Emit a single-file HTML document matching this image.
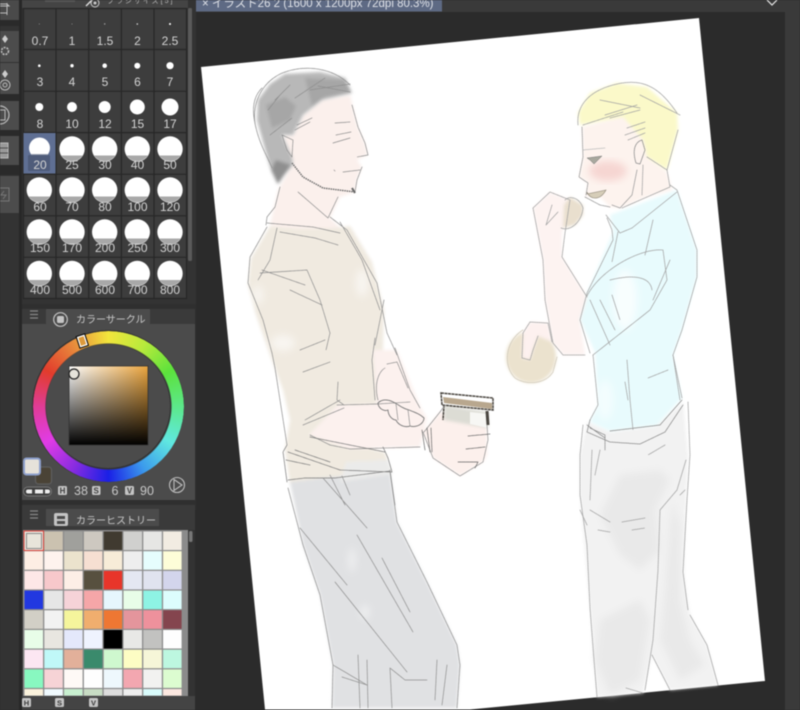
<!DOCTYPE html>
<html lang="ja"><head><meta charset="utf-8"><title>Clip Studio</title>
<style>
html,body{margin:0;padding:0;width:800px;height:710px;overflow:hidden;background:#2b2b2b}
body{position:relative;font-family:"Liberation Sans","Noto Sans CJK JP",sans-serif;filter:blur(.45px)}
svg{position:absolute;left:0;top:0}
#ring{position:absolute;left:33px;top:331px;width:151px;height:151px;border-radius:50%;
background:conic-gradient(from 0deg,#f2e63c,#b8ea3c 30deg,#5ce23c 60deg,#5ce88a 90deg,#60e8e0 120deg,#3c9cec 150deg,#1a20e6 180deg,#8a2ce0 210deg,#e03ce6 240deg,#e03c96 270deg,#e23c2c 300deg,#e88a3c 330deg,#f2e63c);
-webkit-mask:radial-gradient(circle,transparent 62.5px,#000 63.5px);mask:radial-gradient(circle,transparent 62.5px,#000 63.5px)}
#sq{position:absolute;left:69px;top:366px;width:79px;height:79px;background:linear-gradient(to bottom,rgba(0,0,0,0),#000),linear-gradient(to right,#fff,#eba53e)}
text{font-family:"Liberation Sans","Noto Sans CJK JP",sans-serif}
</style></head><body>
<svg width="800" height="710" viewBox="0 0 800 710">
<defs>
<filter id="bl" x="-10%" y="-10%" width="120%" height="120%"><feGaussianBlur stdDeviation="1.6"/></filter>
<filter id="bl3" x="-20%" y="-20%" width="140%" height="140%"><feGaussianBlur stdDeviation="4"/></filter>
<g id="b"><circle r="12.7" fill="#fff"/><path d="M-10.6,6.5H10.6A12.7,12.7 0 0 1-10.6,6.5Z" fill="#a8a8a8"/></g>
</defs>
<!-- window chrome -->
<rect width="800" height="710" fill="#2b2b2b"/>
<rect x="196" width="604" height="12" fill="#3a3a3a"/>
<rect x="785" width="15" height="710" fill="#3a3a3a"/>
<rect x="196" width="246" height="11.5" fill="#5e6a84"/>
<text x="202" y="7" font-size="11.5" fill="#dfe2e8">× イラスト26 2 (1600 x 1200px 72dpi 80.3%)</text>
<path d="M767,0 L772,5 L777,0" fill="none" stroke="#e8e8e8" stroke-width="1.2"/>
<!-- canvas -->
<polygon points="201,67 699,18 765,681 470,709.5 265,709.5" fill="#fff"/>
<!-- man 1 fills -->
<g filter="url(#bl)">
<polygon fill="#fbf0ec" points="322,100 350,95 358,127 365,143 368,155 357,160 362,167 357,180 355,192 340,197 330,218 345,232 300,232 270,225 278,190 292,165 283,135 293,135 303,115"/>
<polygon fill="#f0eae0" points="270,226 300,229 335,228 350,226 372,262 384,310 383,350 376,405 338,406 309,435 385,452 392,472 290,484 285,450 290,420 283,390 270,355 256,315 248,285 251,258"/>
<polygon fill="#fcf1ee" points="373,350 397,350 421,408 427,418 420,447 350,449 309,435 338,405 377,404"/>
<polygon fill="#fcf0ec" points="423,432 440,412 487,425 487,455 483,462 460,476 433,458"/>
<polygon fill="#e0e1e3" points="290,482 330,477 390,472 397,522 427,582 457,645 460,665 457,708 332,708 333,665 320,595 303,545"/>
<polygon fill="#ebebea" points="346,462 388,460 392,474 340,482"/>
</g>
<g filter="url(#bl3)" fill="#fff" opacity=".55">
<ellipse cx="283" cy="343" rx="12" ry="8"/><ellipse cx="362" cy="283" rx="6" ry="14"/><ellipse cx="258" cy="295" rx="5" ry="9"/>
<ellipse cx="352" cy="560" rx="3" ry="12"/><ellipse cx="365" cy="612" rx="4" ry="7"/>
</g>
<!-- hair 1 -->
<g filter="url(#bl)">
<polygon fill="#b8b8b8" points="257,120 258,100 270,84 285,74 320,72 345,78 352,93 322,100 303,115 293,135 282,135 292,157 293,165 277,183 270,167"/>
<polygon fill="#a6a6a6" points="266,105 285,97 296,106 290,120 272,128"/>
<polygon fill="#8f8f8f" points="276,160 291,165 278,184 271,170"/>
<polygon fill="#a6a6a6" points="305,78 345,80 351,92 325,97 312,106"/>
</g>
<!-- cup -->
<polygon fill="#dcdcd4" points="444,405 488,412 488,428 444,420" filter="url(#bl)"/>
<polygon fill="#f7f7f4" points="470,412 488,414 488,428 470,424"/>
<polygon fill="#b8a78e" points="443,397 492,403 492,409 444,403"/>
<path d="M441,393 L493,398 L493,410 L442,405Z M444,405 L443,420" fill="none" stroke="#4a4640" stroke-width="1.5" stroke-dasharray="3 .5"/>
<path d="M487,411 L488,425" stroke="#4a4640" stroke-width="3" fill="none"/>
<!-- man 1 lines -->
<g fill="none" stroke="#8e8e8e" stroke-width=".7" stroke-dasharray="3.5 .5" stroke-linecap="round" stroke-linejoin="round">
<path d="M256,128C250,105 262,80 285,72S335,69 350,85M262,88C252,98 252,112 256,128C260,145 268,158 272,168"/>
<path d="M290,85L275,100M268,110L280,95M295,98L325,78M310,90L350,84M318,86L350,92M270,135L292,118M297,125L312,118M295,130L310,122"/>
<path d="M282,135L293,140L292,157L287,150Z"/>
<path d="M352,105L358,127L365,143L368,155L357,157M362,167L357,180L355,192"/>
<path d="M333,143L350,138M335,123L350,122M336,135L351,132M343,172L360,170M334,170L335,171"/>
<path d="M280,187L275,207L267,217L266,225M338,197L328,218L313,205L298,192"/>
<path d="M267,223L313,227L340,233M280,232L315,238L338,245M330,217L347,230L377,283L387,333L397,355M340,222L362,260L380,310"/>
<path d="M267,227L250,257L248,283L263,320L272,353L275,368L287,445"/>
<path d="M277,228L270,260L258,280M260,273L307,270L320,300L330,333L326,350M262,270L305,285M290,290L322,305M300,350L325,340"/>
<path d="M375,338L372,360L375,400M384,300L375,345M395,348L410,390L420,408"/>
<path d="M303,372L330,362M338,382L337,400L344,405"/>
<path d="M305,420L340,400M303,425L344,408"/>
<path d="M337,405L377,404L410,402M310,435L330,445L350,449L420,447"/>
<path d="M385,368C378,372 374,385 378,400M387,364L397,362L408,388"/>
<path d="M378,403C383,398 390,400 395,403C399,405 402,408 409,410C414,412 420,414 424,418C424,424 416,428 410,426C405,428 398,425 396,420C392,420 388,415 388,410C384,412 378,408 378,403Z" stroke="#777" stroke-width=".9"/>
<path d="M396,404L398,420M408,410L410,426M424,432L440,412L445,405M487,425L488,440L483,462L460,476L433,458L423,432"/>
<path d="M422,430L425,450M427,428L430,452M431,428L432,452M468,436L490,434M466,449L485,447M458,462L478,462L475,468" stroke="#666"/>
<path d="M287,445L283,452L287,482M288,452L340,470L392,472L388,458L383,447M310,437L385,452M295,450L330,462M286,460L310,465M288,480L305,478L335,478L390,471" stroke="#7a7a7a"/>
<path d="M288,488L303,545L320,595L333,665L332,708M390,472L397,522L427,582L457,645L460,665L457,708"/>
<path d="M300,528L347,585M335,582L407,672M357,535L413,632M382,558L410,612M323,478L367,528M330,475L345,505M342,476L350,495M390,470L395,505"/>
<path d="M390,668L392,708M390,668L405,680L427,680M333,665L367,685M342,677L367,685M358,655L360,708M367,660L368,708M437,660L435,700M447,665L442,705"/>
</g>
<path d="M292,163L303,177L323,188L355,192" fill="none" stroke="#6a6a6a" stroke-width="1.4" stroke-dasharray="1.5 .8"/>
<path d="M352,188L355,193" stroke="#666" fill="none" stroke-width="2"/>
<!-- man 2 fills -->
<g filter="url(#bl)">
<polygon fill="#fbf9c9" points="578,113 590,93 617,83 647,87 677,113 678,130 667,170 647,157 643,140 623,117 580,125"/>
<polygon fill="#fdf3ee" points="582,127 623,117 643,140 647,157 667,172 672,190 647,197 620,208 610,207 600,197 585,197 588,183 579,177 583,157"/>
<polygon fill="#e8fbfd" points="610,215 677,190 697,250 697,277 682,330 673,355 682,398 657,425 610,431 590,422 598,405 595,352 580,320 587,293 613,232"/>
<polygon fill="#fdf3f1" points="533,208 550,192 570,200 562,233 562,257 587,297 580,320 585,355 563,355 553,343 545,300 543,260"/>
<ellipse cx="531" cy="357" rx="25" ry="26" fill="#ebe2ce"/>
<polygon fill="#fdf1ef" points="530,322 548,323 552,342 538,336 533,350 530,360 522,358 523,333"/>
<polygon fill="#e9dfce" points="570,197 583,205 583,215 575,225 563,228 564,205"/>
<polygon fill="#f2f2f2" points="587,422 610,432 657,426 683,402 688,455 683,572 690,615 707,645 718,685 670,690 652,655 643,693 597,697 590,608 580,495 580,455"/>
</g>
<ellipse cx="608" cy="171" rx="19" ry="10" fill="#f6d6d2" filter="url(#bl3)"/>
<g filter="url(#bl3)" fill="#fff"><ellipse cx="625" cy="300" rx="12" ry="30" opacity=".7"/><ellipse cx="605" cy="400" rx="8" ry="20" opacity=".5"/></g>
<g filter="url(#bl3)" fill="#e9e9e9">
<polygon points="600,515 620,475 660,470 670,480 655,510 660,550 640,570 620,555"/>
<polygon points="672,500 680,525 680,600 690,640 705,665 680,680 660,640 665,590"/>
<polygon points="600,620 640,600 650,620 640,680 610,695 595,660"/>
</g>
<!-- man 2 lines -->
<g fill="none" stroke="#a2a2a2" stroke-width=".75" stroke-dasharray="1.6 .6" stroke-linecap="round" stroke-linejoin="round">
<path d="M578,125C576,105 590,90 617,84S660,88 677,113M678,130L667,170L647,157"/>
<path d="M583,125L623,112M600,100L640,108M640,95L680,115M605,115L637,105M610,118L640,110M625,135L645,128M628,140L645,133M627,128L645,122"/>
<path d="M642,140C635,142 632,150 636,163L640,164L645,150Z" stroke="#888"/>
<path d="M582,127L583,157L579,177L588,183L586,195M585,197L600,205L610,207M637,170L632,195L620,208L612,205" stroke="#999"/>
<path d="M583,150L605,148" stroke="#bbb"/>
<path d="M643,165L642,195M667,170L670,187L647,197L622,208M670,185L677,190L697,250L697,277L682,330L673,355L682,398"/>
<path d="M606,215L620,233L632,228L677,192M607,218L612,230L613,240L587,293L580,320L590,353M618,232L612,262M653,220L645,255"/>
<path d="M587,296C600,270 640,248 663,250L667,280L650,310L593,355M610,280C630,275 650,275 652,290M653,300L670,260M590,300L610,345M600,300L615,330M612,295L620,320"/>
<path d="M533,208L550,192L570,200L565,233L562,257L587,297M533,208L543,260L545,300L553,343L563,355L585,355"/>
<path d="M552,205L546,225M546,225L558,212"/>
<path d="M530,322L548,323L552,342M538,336L533,350L530,360L522,358L523,333L530,322"/>
<path d="M561,228C570,232 582,222 583,208C580,198 570,195 565,200"/>
<path d="M523,330C506,340 502,365 515,378C525,385 545,385 553,372L557,357" stroke="#cfc8b8"/>
<path d="M593,355L598,405L590,420M627,360L630,400L633,430M625,382L628,400M668,370L648,378M673,355L680,400"/>
<path d="M590,420L587,432L610,442L640,444L665,432L683,405M587,425L605,438M610,431L660,425L682,400M590,428L605,435L605,450" stroke="#8a8a8a"/>
<path d="M583,425L580,455L580,495L587,545L590,608L594,660L597,697M688,402L690,455L687,500L683,572L688,610M690,615L707,645L718,685"/>
<path d="M592,450L590,500M600,450L595,475M686,460L677,490L660,510L658,570L653,640L645,690M580,510L587,525M590,510L610,522M622,522L645,518M632,530L645,528M598,530L610,532"/>
<path d="M652,655L670,690M626,688L643,693M665,445L648,455M680,495L685,490"/>
</g>
<path d="M587,158L602,156L594,164L590,160Z" fill="#a8a89e" stroke="#777" stroke-width=".5"/>
<path d="M587,192C590,200 600,201 606,190L587,194Z" stroke="#8a8374" stroke-width=".6" fill="#d6cdb8"/>
<!-- left chrome -->
<rect x="0" width="20" height="710" fill="#333"/>
<rect x="0" y="0" width="19" height="20" fill="#4a4a4a"/>
<rect x="0" y="20" width="19" height="6" fill="#2a2a2a"/>
<rect x="0" y="31" width="19" height="31" fill="#4c4c4c"/>
<rect x="0" y="63" width="19" height="31" fill="#4c4c4c"/>
<rect x="0" y="94" width="19" height="7" fill="#2a2a2a"/>
<rect x="0" y="101" width="19" height="29" fill="#4c4c4c"/>
<rect x="0" y="130" width="19" height="6" fill="#2a2a2a"/>
<rect x="0" y="136" width="19" height="29" fill="#4c4c4c"/>
<rect x="0" y="165" width="19" height="10" fill="#2a2a2a"/>
<rect x="0" y="176" width="19" height="37" fill="#4c4c4c"/>
<rect x="19" width="3" height="710" fill="#272727"/>
<g fill="none" stroke="#bbb" stroke-width="1">
<path d="M0,4H7L9,6H0M0,13H7M7,3V15" />
<path d="M5,35L8,39L5,43L2,39Z" fill="#ccc" stroke="none"/>
<circle cx="5" cy="51" r="3.5" stroke-width="1.6" stroke-dasharray="2 1"/>
<path d="M5,70L8,74L5,78L2,74Z" fill="#ccc" stroke="none"/>
<circle cx="5" cy="85" r="5"/><circle cx="5" cy="85" r="2"/>
<circle cx="0" cy="115" r="9" stroke-width="1.2"/><rect x="-3" y="110" width="8" height="10"/>
<rect x="0" y="143" width="8" height="15" fill="#999"/>
<path d="M0,148H8M0,153H8" stroke="#4c4c4c"/>
<rect x="-2" y="188" width="11" height="13" stroke="#777"/><path d="M4,191L1,195H6L3,199" stroke="#777"/>
</g>
<!-- brush panel -->
<rect x="22" width="174" height="304" fill="#333"/>
<rect x="22" width="166" height="8" fill="#444"/>
<rect x="45" width="30" height="2" fill="#555"/>
<path d="M86,6L92,0" stroke="#ddd" stroke-width="1.4"/>
<circle cx="95" cy="3" r="4" fill="none" stroke="#ccc"/><circle cx="95" cy="3" r="1.5" fill="#ccc"/>
<text x="107" y="3" font-size="7" fill="#bbb" letter-spacing="2">ブラシサイズ[5]</text>
<rect x="188" y="8" width="4" height="253" fill="#5a5a5a" rx="1.5"/>
<rect x="23" y="8" width="164" height="291" fill="#3d3d3d"/>
<g stroke="#272727" stroke-width="1.2">
<path d="M23.5,8V299M56,8V299M88.7,8V299M121.4,8V299M154,8V299M186.5,8V299"/>
<path d="M23,8.5H187M23,49.5H187M23,91.3H187M23,132.6H187M23,174.3H187M23,215.8H187M23,257.3H187M23,298.5H187"/>
</g>
<rect x="23.5" y="133" width="32" height="40.5" fill="#5f6f93"/>
<g fill="#fff">
<circle cx="39.3" cy="24" r=".5" fill="#999"/><circle cx="72" cy="24" r=".5" fill="#999"/><circle cx="104.7" cy="24" r=".7" fill="#aaa"/><circle cx="137.3" cy="24" r=".8" fill="#ddd"/><circle cx="170" cy="24" r="1"/>
<circle cx="39.3" cy="65.7" r="1.3"/><circle cx="72" cy="65.7" r="1.7"/><circle cx="104.7" cy="65.7" r="2.3"/><circle cx="137.3" cy="65.7" r="3"/><circle cx="170" cy="65.7" r="3.6"/>
<circle cx="39.3" cy="107" r="4"/><circle cx="72" cy="107" r="5"/><circle cx="104.7" cy="107" r="6"/><circle cx="137.3" cy="107" r="7.5"/><circle cx="170" cy="107" r="8.5"/>
</g>
<circle cx="39.5" cy="148" r="10.5" fill="#fff"/><path d="M31,154H48A10.5,10.5 0 0 1 31,154Z" fill="#9aa0b0"/>
<rect x="28" y="155" width="22" height="16" rx="1.5" fill="#4f5c7a"/>
<use href="#b" x="72" y="149"/><use href="#b" x="104.7" y="149"/><use href="#b" x="137.3" y="149"/><use href="#b" x="170" y="149"/>
<use href="#b" x="39.3" y="190"/><use href="#b" x="72" y="190"/><use href="#b" x="104.7" y="190"/><use href="#b" x="137.3" y="190"/><use href="#b" x="170" y="190"/>
<use href="#b" x="39.3" y="232"/><use href="#b" x="72" y="232"/><use href="#b" x="104.7" y="232"/><use href="#b" x="137.3" y="232"/><use href="#b" x="170" y="232"/>
<use href="#b" x="39.3" y="273.5"/><use href="#b" x="72" y="273.5"/><use href="#b" x="104.7" y="273.5"/><use href="#b" x="137.3" y="273.5"/><use href="#b" x="170" y="273.5"/>
<g font-size="12" fill="#d4d4d4" text-anchor="middle">
<text x="40" y="45">0.7</text><text x="72" y="45">1</text><text x="105" y="45">1.5</text><text x="137.5" y="45">2</text><text x="170" y="45">2.5</text>
<text x="40" y="86">3</text><text x="72" y="86">4</text><text x="105" y="86">5</text><text x="137.5" y="86">6</text><text x="170" y="86">7</text>
<text x="40" y="128">8</text><text x="72" y="128">10</text><text x="105" y="128">12</text><text x="137.5" y="128">15</text><text x="170" y="128">17</text>
<text x="40" y="169">20</text><text x="72" y="169">25</text><text x="105" y="169">30</text><text x="137.5" y="169">40</text><text x="170" y="169">50</text>
<text x="40" y="211">60</text><text x="72" y="211">70</text><text x="105" y="211">80</text><text x="137.5" y="211">100</text><text x="170" y="211">120</text>
<text x="40" y="252">150</text><text x="72" y="252">170</text><text x="105" y="252">200</text><text x="137.5" y="252">250</text><text x="170" y="252">300</text>
<text x="40" y="294">400</text><text x="72" y="294">500</text><text x="105" y="294">600</text><text x="137.5" y="294">700</text><text x="170" y="294">800</text>
</g>
<!-- color circle panel -->
<rect x="22" y="304" width="174" height="206" fill="#2f2f2f"/>
<rect x="22" y="309" width="173" height="16" fill="#3a3a3a"/>
<rect x="22" y="324" width="173" height="176" fill="#4b4b4b"/>
<rect x="46" y="309" width="104" height="16" fill="#4b4b4b"/>
<path d="M30,311H38M30,314.5H38M30,318H38" stroke="#888" stroke-width="1.2"/>
<circle cx="60.5" cy="319.5" r="6.8" fill="none" stroke="#c4c4c4" stroke-width="1.2"/><rect x="57" y="316" width="7" height="7" rx="1.5" fill="#c4c4c4"/>
<text x="76" y="323" font-size="10" fill="#c9c9c9">カラーサークル</text>
<circle cx="108" cy="406" r="76" fill="#333"/>
<circle cx="108" cy="406" r="62" fill="#4b4b4b"/>
<!-- history panel -->
<rect x="22" y="505" width="173" height="205" fill="#3a3a3a"/>
<rect x="46" y="509" width="113" height="17" fill="#4b4b4b"/>
<path d="M30,511H38M30,514.5H38M30,518H38" stroke="#888" stroke-width="1.2"/>
<rect x="54" y="513" width="14" height="13" rx="2" fill="#c4c4c4"/><rect x="57" y="516" width="8" height="3" fill="#4b4b4b"/><rect x="57" y="521" width="8" height="3" fill="#4b4b4b"/>
<text x="76" y="524" font-size="10" fill="#c9c9c9">カラーヒストリー</text>
<rect x="23" y="530" width="165" height="166" fill="#8b8b8b"/>
<g id="sw">
<g transform="translate(24.5,531.5)">
<rect width="18.5" height="18.5" fill="#e8e4da"/><rect x="19.8" width="18.5" height="18.5" fill="#cbc2b0"/><rect x="39.6" width="18.5" height="18.5" fill="#a0a09c"/><rect x="59.4" width="18.5" height="18.5" fill="#cdc8c0"/><rect x="79.2" width="18.5" height="18.5" fill="#403a30"/><rect x="99" width="18.5" height="18.5" fill="#d0d0ce"/><rect x="118.8" width="18.5" height="18.5" fill="#e6e6e4"/><rect x="138.6" width="18.5" height="18.5" fill="#f2ece2"/>
</g>
<g transform="translate(24.5,551.2)">
<rect width="18.5" height="18.5" fill="#fdeee4"/><rect x="19.8" width="18.5" height="18.5" fill="#fef3ee"/><rect x="39.6" width="18.5" height="18.5" fill="#ebe3cd"/><rect x="59.4" width="18.5" height="18.5" fill="#f6dfd2"/><rect x="79.2" width="18.5" height="18.5" fill="#f7ecd8"/><rect x="99" width="18.5" height="18.5" fill="#eeeeee"/><rect x="118.8" width="18.5" height="18.5" fill="#e6fdfd"/><rect x="138.6" width="18.5" height="18.5" fill="#fdfdd8"/>
</g>
<g transform="translate(24.5,570.9)">
<rect width="18.5" height="18.5" fill="#fde7e7"/><rect x="19.8" width="18.5" height="18.5" fill="#f7c8cb"/><rect x="39.6" width="18.5" height="18.5" fill="#fdeee6"/><rect x="59.4" width="18.5" height="18.5" fill="#57503f"/><rect x="79.2" width="18.5" height="18.5" fill="#e8352a"/><rect x="99" width="18.5" height="18.5" fill="#e4e7f2"/><rect x="118.8" width="18.5" height="18.5" fill="#e0e3ef"/><rect x="138.6" width="18.5" height="18.5" fill="#d3d5ec"/>
</g>
<g transform="translate(24.5,590.6)">
<rect width="18.5" height="18.5" fill="#2238e0"/><rect x="19.8" width="18.5" height="18.5" fill="#e6e6e6"/><rect x="39.6" width="18.5" height="18.5" fill="#f6d3d8"/><rect x="59.4" width="18.5" height="18.5" fill="#f5a6a8"/><rect x="79.2" width="18.5" height="18.5" fill="#e6f6fd"/><rect x="99" width="18.5" height="18.5" fill="#e8fde8"/><rect x="118.8" width="18.5" height="18.5" fill="#8ef3e4"/><rect x="138.6" width="18.5" height="18.5" fill="#dcfdfd"/>
</g>
<g transform="translate(24.5,610.3)">
<rect width="18.5" height="18.5" fill="#d2cfc6"/><rect x="19.8" width="18.5" height="18.5" fill="#f2f2f2"/><rect x="39.6" width="18.5" height="18.5" fill="#f5f59c"/><rect x="59.4" width="18.5" height="18.5" fill="#f0ae6e"/><rect x="79.2" width="18.5" height="18.5" fill="#ee7733"/><rect x="99" width="18.5" height="18.5" fill="#e4959c"/><rect x="118.8" width="18.5" height="18.5" fill="#ee919c"/><rect x="138.6" width="18.5" height="18.5" fill="#84454e"/>
</g>
<g transform="translate(24.5,630)">
<rect width="18.5" height="18.5" fill="#e8fde8"/><rect x="19.8" width="18.5" height="18.5" fill="#e8e6e0"/><rect x="39.6" width="18.5" height="18.5" fill="#e4e8fb"/><rect x="59.4" width="18.5" height="18.5" fill="#eff3fe"/><rect x="79.2" width="18.5" height="18.5" fill="#000"/><rect x="99" width="18.5" height="18.5" fill="#e8e8e6"/><rect x="118.8" width="18.5" height="18.5" fill="#c2c2c0"/><rect x="138.6" width="18.5" height="18.5" fill="#fefefe"/>
</g>
<g transform="translate(24.5,649.7)">
<rect width="18.5" height="18.5" fill="#fce6f2"/><rect x="19.8" width="18.5" height="18.5" fill="#c0f8f8"/><rect x="39.6" width="18.5" height="18.5" fill="#e2b09a"/><rect x="59.4" width="18.5" height="18.5" fill="#3a8a6c"/><rect x="79.2" width="18.5" height="18.5" fill="#cff8cf"/><rect x="99" width="18.5" height="18.5" fill="#fdfdc4"/><rect x="118.8" width="18.5" height="18.5" fill="#f6f6d8"/><rect x="138.6" width="18.5" height="18.5" fill="#bdf7e0"/>
</g>
<g transform="translate(24.5,669.4)">
<rect width="18.5" height="18.5" fill="#88f8c0"/><rect x="19.8" width="18.5" height="18.5" fill="#f6d3d6"/><rect x="39.6" width="18.5" height="18.5" fill="#fef9f6"/><rect x="59.4" width="18.5" height="18.5" fill="#fefefe"/><rect x="79.2" width="18.5" height="18.5" fill="#eef8fd"/><rect x="99" width="18.5" height="18.5" fill="#f3a7b0"/><rect x="118.8" width="18.5" height="18.5" fill="#f2f2f0"/><rect x="138.6" width="18.5" height="18.5" fill="#dcfcd0"/>
</g>
<g transform="translate(24.5,689.1)">
<rect width="18.5" height="6.5" fill="#fbf2dc"/><rect x="19.8" width="18.5" height="6.5" fill="#f0fafe"/><rect x="39.6" width="18.5" height="6.5" fill="#c8f0d0"/><rect x="59.4" width="18.5" height="6.5" fill="#c8dcc4"/><rect x="79.2" width="18.5" height="6.5" fill="#dddddd"/><rect x="99" width="18.5" height="6.5" fill="#eeeeee"/><rect x="118.8" width="18.5" height="6.5" fill="#d8fbfb"/><rect x="138.6" width="18.5" height="6.5" fill="#fce8e0"/>
</g>
</g>
<rect x="24" y="531" width="19.5" height="19.5" fill="none" stroke="#d8403a" stroke-width="1"/>
<rect x="26.5" y="533.5" width="15" height="15" fill="none" stroke="#8a8a8a" stroke-width="1"/>
<rect x="188" y="530" width="7" height="166" fill="#333"/>
<rect x="189" y="531" width="3.5" height="11" rx="1.5" fill="#777"/>
<rect x="22" y="696" width="173" height="14" fill="#444"/>
<g font-size="7.5" font-weight="bold" fill="#3a3a3a" text-anchor="middle">
<rect x="22" y="698" width="9" height="9" rx="1.5" fill="#c4c4c4"/><text x="26.5" y="705.5">H</text>
<rect x="55" y="698" width="9" height="9" rx="1.5" fill="#c4c4c4"/><text x="59.5" y="705.5">S</text>
<rect x="89" y="698" width="9" height="9" rx="1.5" fill="#c4c4c4"/><text x="93.5" y="705.5">V</text>
</g>
</svg>
<div id="ring"></div>
<div id="sq"></div>
<svg width="800" height="710" viewBox="0 0 800 710">
<rect x="69" y="366" width="79" height="79" fill="none" stroke="#333" stroke-width=".8"/>
<circle cx="74" cy="374" r="5" fill="#e6e3da" stroke="#222" stroke-width="1.2"/>
<g transform="translate(82.3,341) rotate(-18)">
<rect x="-5" y="-6.5" width="10" height="13" fill="#000"/>
<rect x="-4" y="-5.5" width="8" height="11" fill="#fff"/>
<rect x="-2.7" y="-4.2" width="5.4" height="8.4" fill="#dd9a3c"/>
</g>
<rect x="35.5" y="467" width="16" height="17" rx="3" fill="#4a4336" stroke="#5e5e5e" stroke-width="1.2"/>
<rect x="24" y="458.5" width="16" height="16" rx="2.5" fill="#e6e2da" stroke="#8ea0cc" stroke-width="2"/>
<rect x="23.5" y="487" width="28" height="9" rx="4.5" fill="#3f3f3f" stroke="#777" stroke-width="1"/>
<rect x="26" y="489.5" width="24" height="4" rx="2" fill="#eee"/>
<rect x="32" y="489.5" width="3" height="4" fill="#444"/><rect x="43" y="489.5" width="2" height="4" fill="#444"/>
<g font-size="8" font-weight="bold" fill="#3f3f3f" text-anchor="middle">
<rect x="58" y="486" width="9" height="9" rx="1.5" fill="#c4c4c4"/><text x="62.5" y="493.5">H</text>
<rect x="92" y="486" width="8.5" height="9" rx="1.5" fill="#c4c4c4"/><text x="96.2" y="493.5">S</text>
<rect x="125" y="486" width="9" height="9" rx="1.5" fill="#c4c4c4"/><text x="129.5" y="493.5">V</text>
</g>
<g font-size="12.5" fill="#c9c9c9" text-anchor="middle">
<text x="81" y="495">38</text><text x="115" y="495">6</text><text x="147" y="495">90</text>
</g>
<circle cx="177" cy="485" r="7.5" fill="none" stroke="#bdbdbd" stroke-width="1.1"/>
<path d="M174,479.5L182,485L174,490.5Z" fill="none" stroke="#bdbdbd" stroke-width="1.1"/>
</svg>
</body></html>
